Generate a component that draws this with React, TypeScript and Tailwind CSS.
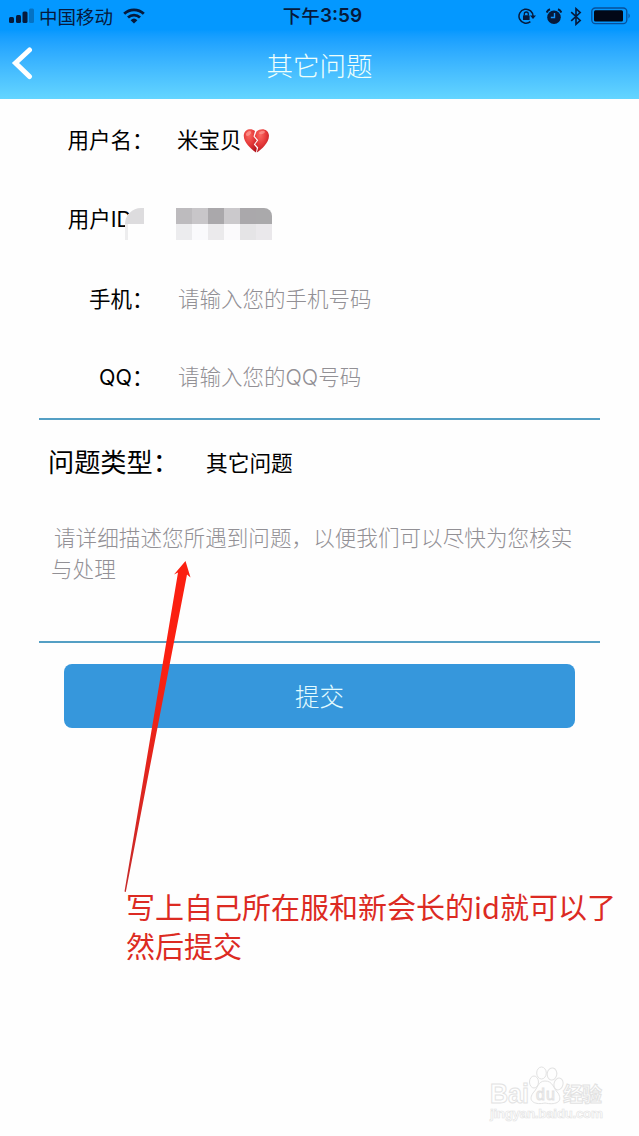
import { type ReactNode } from "react";

interface FieldRowProps {
  label: string;
  children: ReactNode;
}

/** One line of the form: right-aligned label and its value */
function FieldRow({ label, children }: FieldRowProps) {
  return (
    <div className="flex h-[79px] items-center text-[21.5px] text-black">
      <span className="w-[132px] shrink-0 whitespace-nowrap text-right">
        {label}
      </span>
      <span className="w-[22px] shrink-0">：</span>
      <div className="ml-[23px] flex items-center whitespace-nowrap">
        {children}
      </div>
    </div>
  );
}

function StatusBar() {
  return (
    <div className="flex h-8 items-center justify-between text-[#061a3c]">
      <div className="flex w-[270px] items-center pl-[9px]">
        <svg width="26" height="16" viewBox="0 0 26 16" fill="currentColor">
          <rect x="0" y="9" width="5" height="6" rx="1.5" />
          <rect x="7" y="7" width="5" height="8" rx="1.5" />
          <rect x="13.500" y="3.500" width="5" height="11.500" rx="1.500" />
          <rect x="20" y="0.500" width="5" height="14.500" rx="1.5" opacity="0.3" />
        </svg>
        <span className="ml-1 text-[18.500px] leading-8">中国移动</span>
        <svg
          className="ml-[10px]"
          width="22"
          height="16"
          viewBox="0 0 22 16"
          fill="none"
          stroke="currentColor"
          strokeWidth="2.8"
        >
          <path d="M1.200 5.800A14 14 0 0 1 20.800 5.800" />
          <path d="M5 9.600A8.700 8.700 0 0 1 17 9.600" />
          <path d="M11 15.500L7.600 12.200A5 5 0 0 1 14.400 12.200Z" fill="currentColor" stroke="none" />
        </svg>
      </div>
      <span className="ml-[6px] flex items-center whitespace-nowrap text-[18.500px] font-medium leading-8">
        <span className="-mt-0.5">下午</span>
        <span className="font-[Inter,sans-serif] text-[19px] font-semibold">3:59</span>
      </span>
      <div className="flex w-[270px] items-center justify-end pr-2">
        {/* rotation lock */}
        <svg width="18" height="17" viewBox="0 0 18 17" fill="none" stroke="currentColor">
          <path d="M12.400 13.600A7 7 0 1 1 15 8.500" strokeWidth="1.5" />
          <path d="M12 7.500H18L15 11Z" fill="currentColor" stroke="none" />
          <rect x="5" y="7.300" width="6.600" height="4.700" rx="0.600" fill="currentColor" stroke="none" />
          <path d="M6.300 7.500V6A2 2 0 0 1 10.300 6V7.500" strokeWidth="1.300" />
        </svg>
        {/* alarm */}
        <svg className="ml-2.5" width="16" height="17" viewBox="0 0 16 17">
          <circle cx="8" cy="9.200" r="6.800" fill="#061a3c" />
          <path d="M0.600 4.500A6 6 0 0 1 4 1.300M15.400 4.500A6 6 0 0 0 12 1.300" stroke="#061a3c" strokeWidth="2" fill="none" />
          <path d="M8.500 5V9.500H4.800" stroke="#1496ff" strokeWidth="1.400" fill="none" />
        </svg>
        <svg
          className="ml-2"
          width="12"
          height="19"
          viewBox="0 0 12 19"
          fill="none"
          stroke="currentColor"
          strokeWidth="1.600"
        >
          <path d="M1.200 5.200L10.200 13.400L6 17.300V1.700L10.200 5.600L1.200 13.800" />
        </svg>
        <svg className="ml-[9px]" width="40" height="18" viewBox="0 0 40 18">
          <rect x="0.800" y="1" width="35" height="15.600" rx="3.500" fill="none" stroke="#07509b" strokeWidth="1.300" />
          <rect x="3" y="3.200" width="29" height="11.200" rx="1.500" fill="#020817" />
          <path d="M37.500 6.200Q40 8.800 37.500 11.500Z" fill="#07509b" />
        </svg>
      </div>
    </div>
  );
}

function BrokenHeart() {
  return (
    <svg className="ml-px mt-[3px]" width="27" height="26" viewBox="0 0 27 26">
      <defs>
        <radialGradient id="heart" cx="0.4" cy="0.25" r="0.8">
          <stop offset="0" stopColor="#fa6a62" />
          <stop offset="0.5" stopColor="#e63a3a" />
          <stop offset="1" stopColor="#b3141d" />
        </radialGradient>
      </defs>
      <path
        d="M12 3C8-0.500 1.500 1 0.800 7C0.200 14 7.500 20.500 13 24.500L13.800 20L10.800 16.500L13.800 12.500L10.500 8.500Z"
        fill="url(#heart)"
      />
      <path
        d="M13.500 3.500C18-0.700 25.200 0.800 25.900 7C26.600 14 19 21 13.800 24.500L15.200 19.500L12.200 16.300L15.200 12.300L11.700 8.200Z"
        fill="url(#heart)"
      />
      <ellipse cx="5.500" cy="5.500" rx="3" ry="1.800" fill="#ffaaa3" opacity="0.600" transform="rotate(-35 5.500 5.500)" />
      <ellipse cx="19" cy="4.500" rx="3" ry="1.500" fill="#ffaaa3" opacity="0.600" transform="rotate(-15 19 4.500)" />
    </svg>
  );
}

function MaskedId() {
  return (
    <div className="-ml-px mt-[9px] grid h-8 w-24 grid-cols-6 grid-rows-2 overflow-hidden rounded-tr-lg">
      <span className="bg-[#bdbbbe]" />
      <span className="bg-[#c8c6c9]" />
      <span className="bg-[#aaa8ab]" />
      <span className="bg-[#cbc9cc]" />
      <span className="bg-[#aaa8ab]" />
      <span className="bg-[#aaa9ab]" />
      <span className="bg-[#ececee]" />
      <span className="bg-[#fafafc]" />
      <span className="bg-[#ebeaec]" />
      <span className="bg-[#fbfafc]" />
      <span className="bg-[#e5e4e6]" />
      <span className="bg-[#eae8eb]" />
    </div>
  );
}

function Watermark() {
  return (
    <svg
      className="absolute left-[486px] top-[1062px]"
      width="122"
      height="62"
      viewBox="0 0 122 62"
      fill="#fefefe"
      stroke="#e2e2e2"
      strokeWidth="1"
    >
      <g fontFamily="Liberation Sans, Noto Sans CJK SC, sans-serif" fontWeight="bold">
        <text x="4" y="41" fontSize="27" textLength="39" lengthAdjust="spacingAndGlyphs">Bai</text>
        <ellipse cx="48" cy="20" rx="4.500" ry="6" />
        <ellipse cx="55.500" cy="11" rx="4.800" ry="6" />
        <ellipse cx="66" cy="12" rx="4.800" ry="6" transform="rotate(10 66 12)" />
        <ellipse cx="72.500" cy="22" rx="4.500" ry="6" transform="rotate(15 72.500 22)" />
        <path d="M59 19C67 19 67 26 72 31C78 41 68 43 59 41C50 43 41 40 47 31C52 26 52 19 59 19Z" />
        <text x="50" y="38" fontSize="16" fontWeight="normal" textLength="19">du</text>
        <text x="77" y="40" fontSize="20" textLength="39">经验</text>
        <text x="4" y="56" fontSize="13.500" textLength="113" strokeWidth="0.600">
          jingyan.baidu.com
        </text>
      </g>
    </svg>
  );
}

export default function App() {
  return (
    <div className="relative h-[1136px] w-[639px] overflow-hidden bg-[#fefefe] font-['Noto_Sans_CJK_SC',sans-serif]">
      <header className="h-[99px] bg-linear-to-b from-[#0498ff] from-30% to-[#64d5ff]">
        <StatusBar />
        <div className="grid h-[67px] grid-cols-[1fr_auto_1fr] items-center">
          <svg
            className="-mt-1.5 ml-[11px]"
            width="22"
            height="34"
            viewBox="0 0 22 34"
            fill="none"
            stroke="white"
            strokeWidth="5"
            strokeLinecap="round"
          >
            <path d="M18.500 4L4.500 17L18.500 30.500" />
          </svg>
          <h1 className="-mt-[3px] text-[26.500px] font-light leading-[67px] text-[#effffb]">
            其它问题
          </h1>
        </div>
      </header>

      <main>
        <section className="mr-[39px] h-[319px] pt-px">
          <FieldRow label="用户名">
            米宝贝
            <BrokenHeart />
          </FieldRow>
          <div className="relative">
            <div className="pt-px font-[Inter,'Noto_Sans_CJK_SC',sans-serif]">
              <FieldRow label="用户ID">
                <MaskedId />
              </FieldRow>
            </div>
            <span className="absolute left-[125px] top-[29px] h-8 w-8 overflow-hidden rounded-tl-2xl bg-[#fefefe]">
              <span className="block h-4 w-[19px] bg-[#dddcde]" />
              <span className="block h-4 w-[3px] bg-[#ededee]" />
            </span>
          </div>
          <FieldRow label="手机">
            <span className="ml-px font-light text-[#929095]">请输入您的手机号码</span>
          </FieldRow>
          <div className="font-[Inter,'Noto_Sans_CJK_SC',sans-serif]">
            <FieldRow label="QQ">
              <span className="ml-px font-light text-[#929095]">请输入您的QQ号码</span>
            </FieldRow>
          </div>
        </section>

        <section className="mx-[39px] h-[225px] border-y-2 border-[#549fc4]">
          <div className="flex h-[84px] items-center whitespace-nowrap pl-[9px] text-black">
            <span className="w-[158px] text-[26.200px]">问题类型：</span>
            <span className="text-[21.700px]">其它问题</span>
          </div>
          <p className="ml-3 mt-[17px] w-[540px] indent-[3px] text-[21.600px] font-light leading-[31px] text-[#929095]">
            请详细描述您所遇到问题，以便我们可以尽快为您核实
            <br />
            与处理
          </p>
        </section>

        <button
          type="button"
          className="ml-16 mt-[21px] block h-16 w-[511px] rounded-lg bg-[#3697dc] text-[24.500px] font-light text-[#e3fbff]"
        >
          提交
        </button>
      </main>

      <svg
        className="absolute left-[120px] top-[560px]"
        width="75"
        height="335"
        viewBox="0 0 75 335"
      >
        <defs>
          <linearGradient id="arrow" x1="0" y1="0" x2="0" y2="1">
            <stop offset="0.3" stopColor="#fb2011" />
            <stop offset="1" stopColor="#c62b2b" />
          </linearGradient>
        </defs>
        <path d="M65.500 1L70.500 17.500L67 14.500L5.800 332L4.500 331.500L58 12.500L54 14.500Z" fill="url(#arrow)" />
      </svg>
      <p className="absolute left-[126px] top-[887px] whitespace-nowrap text-[29px] leading-[39px] text-[#dc2a22]">
        写上自己所在服和新会长的id就可以了
        <br />
        然后提交
      </p>
      <Watermark />
    </div>
  );
}
